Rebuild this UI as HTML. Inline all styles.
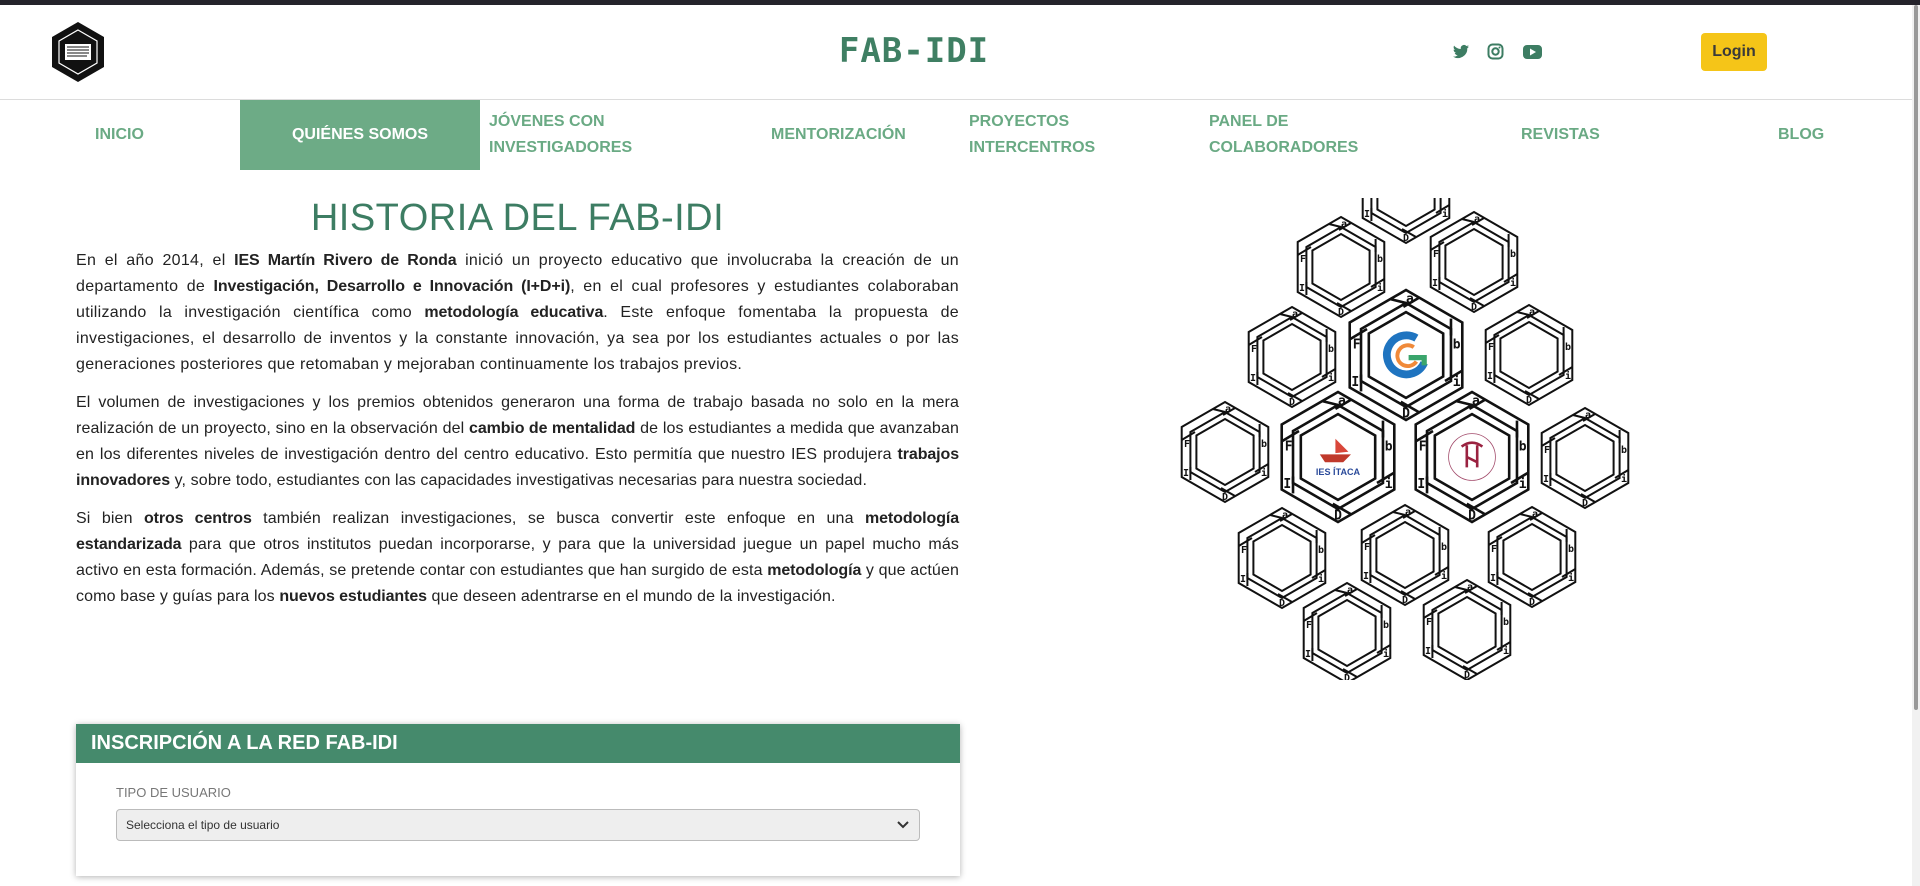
<!DOCTYPE html>
<html><head><meta charset="utf-8"><style>
*{box-sizing:border-box;margin:0;padding:0}
body{width:1920px;height:886px;overflow:hidden;background:#fff;font-family:"Liberation Sans",sans-serif;color:#212529;position:relative}
.topbar{position:absolute;left:0;top:0;width:1920px;height:5px;background:#24232b}
.header{position:absolute;left:0;top:5px;width:1912px;height:95px;border-bottom:1px solid #dcdcdc}
.title{position:absolute;left:0;width:1828px;top:26px;text-align:center;font-family:"DejaVu Sans Mono",monospace;font-weight:bold;font-size:34px;color:#3f7f63;letter-spacing:1px}
.login{position:absolute;left:1701px;top:28px;width:66px;height:38px;background:#f5c518;border-radius:4px;font-weight:bold;font-size:16px;color:#3a3a3a;text-align:center;line-height:38px}
.nav{position:absolute;top:100px;left:0;height:70px;width:1912px}
.nav div{position:absolute;top:0;height:70px;display:flex;align-items:center;font-size:16px;font-weight:bold;color:#6aaa84;line-height:26px;text-transform:uppercase}
.nav .act{background:#6dab86;color:#fff;justify-content:center}
h1{position:absolute;left:76px;width:883px;top:197px;text-align:center;font-weight:normal;font-size:38px;color:#3d7d63;letter-spacing:.5px}
.txt{position:absolute;left:76px;width:883px;top:248px;font-size:16px;letter-spacing:.3px;line-height:26px;text-align:justify;color:#222}
.txt b{letter-spacing:-.1px}
.txt p{margin-bottom:12px}
.txt p.n{letter-spacing:.12px}
.card{position:absolute;left:76px;top:724px;width:884px;height:152px;box-shadow:0 1px 6px rgba(0,0,0,.3);background:#fff}
.card .hd{height:39px;background:#458a6c;color:#fff;font-weight:bold;font-size:20px;line-height:39px;padding-left:15px}
.card .lb{position:absolute;left:40px;top:61px;font-size:13px;color:#777}
.card .sel{position:absolute;left:40px;top:85px;width:804px;height:32px;background:#eee;border:1px solid #bbb;border-radius:4px;font-size:12px;line-height:30px;padding-left:9px;color:#333}
.scroll{position:absolute;left:1912px;top:5px;width:8px;height:881px;background:#f1f1f1}
.scroll i{position:absolute;left:2px;top:0;width:4px;height:705px;background:#999;border-radius:2px}
</style></head><body>
<div class="topbar"></div>
<div class="header">
<svg style="position:absolute;left:50px;top:16px" width="56" height="62" viewBox="0 0 56 62">
<polygon points="28,1 54,16 54,46 28,61 2,46 2,16" fill="#111"/>
<polygon points="28,9 47,20 47,42 28,53 9,42 9,20" fill="none" stroke="#fff" stroke-width="1.2"/>
<rect x="15" y="23" width="26" height="16" fill="#fff"/>
<g stroke="#111" stroke-width="1"><line x1="17" y1="26" x2="39" y2="26"/><line x1="17" y1="29" x2="39" y2="29"/><line x1="17" y1="32" x2="39" y2="32"/><line x1="17" y1="35" x2="37" y2="35"/></g>
</svg>
<div class="title">FAB-IDI</div>
<svg style="position:absolute;left:1453px;top:38px" width="95" height="18" viewBox="0 0 95 18" fill="#3d7d63">
<path d="M16 3.5c-.6.3-1.2.4-1.9.5.7-.4 1.2-1 1.4-1.8-.6.4-1.3.6-2.1.8A3.3 3.3 0 0 0 7.8 6c-2.7-.1-5.1-1.4-6.7-3.4-.9 1.5-.4 3.4 1 4.4-.5 0-1-.2-1.5-.4 0 1.6 1.1 3 2.6 3.3-.5.1-1 .2-1.5.1.4 1.3 1.7 2.3 3.1 2.3A6.6 6.6 0 0 1 0 13.6 9.3 9.3 0 0 0 14.3 5.3c.7-.5 1.2-1.1 1.7-1.8z"/>
<rect x="35.5" y="1.5" width="14" height="14" rx="4" fill="none" stroke="#3d7d63" stroke-width="2"/>
<circle cx="42.5" cy="8.5" r="3.2" fill="none" stroke="#3d7d63" stroke-width="2"/><circle cx="46.5" cy="4.5" r="1"/>
<rect x="70" y="2" width="19" height="14" rx="4"/><polygon points="77,5.5 83,9 77,12.5" fill="#fff"/>
</svg>
<div class="login">Login</div>
</div>
<div class="nav">
<div style="left:95px">INICIO</div>
<div class="act" style="left:240px;width:240px">QUIÉNES SOMOS</div>
<div style="left:489px">JÓVENES CON<br>INVESTIGADORES</div>
<div style="left:771px">MENTORIZACIÓN</div>
<div style="left:969px">PROYECTOS<br>INTERCENTROS</div>
<div style="left:1209px">PANEL DE<br>COLABORADORES</div>
<div style="left:1521px">REVISTAS</div>
<div style="left:1778px">BLOG</div>
</div>
<h1>HISTORIA DEL FAB-IDI</h1>
<div class="txt">
<p>En el año 2014, el <b>IES Martín Rivero de Ronda</b> inició un proyecto educativo que involucraba la creación de un departamento de <b>Investigación, Desarrollo e Innovación (I+D+i)</b>, en el cual profesores y estudiantes colaboraban utilizando la investigación científica como <b>metodología educativa</b>. Este enfoque fomentaba la propuesta de investigaciones, el desarrollo de inventos y la constante innovación, ya sea por los estudiantes actuales o por las generaciones posteriores que retomaban y mejoraban continuamente los trabajos previos.</p>
<p class="n">El volumen de investigaciones y los premios obtenidos generaron una forma de trabajo basada no solo en la mera realización de un proyecto, sino en la observación del <b>cambio de mentalidad</b> de los estudiantes a medida que avanzaban en los diferentes niveles de investigación dentro del centro educativo. Esto permitía que nuestro IES produjera <b>trabajos innovadores</b> y, sobre todo, estudiantes con las capacidades investigativas necesarias para nuestra sociedad.</p>
<p class="n">Si bien <b>otros centros</b> también realizan investigaciones, se busca convertir este enfoque en una <b>metodología estandarizada</b> para que otros institutos puedan incorporarse, y para que la universidad juegue un papel mucho más activo en esta formación. Además, se pretende contar con estudiantes que han surgido de esta <b>metodología</b> y que actúen como base y guías para los <b>nuevos estudiantes</b> que deseen adentrarse en el mundo de la investigación.</p>
</div>
<svg style="position:absolute;left:1150px;top:180px" width="520" height="510" viewBox="1150 180 520 510">
<defs>
<clipPath id="cp"><rect x="1150" y="198" width="520" height="482"/></clipPath>
<g id="hx" fill="none" stroke="#111" stroke-width="2">
<polygon points="0,-50 43.3,-25 43.3,25 0,50 -43.3,25 -43.3,-25"/>
<polygon points="0,-40 34.6,-20 34.6,20 0,40 -34.6,20 -34.6,-20"/>
<polygon points="0,-33 28.6,-16.5 28.6,16.5 0,33 -28.6,16.5 -28.6,-16.5"/>
<line x1="-12" y1="-43" x2="0" y2="-40"/><line x1="10" y1="-44" x2="-2" y2="-37"/>
<line x1="34.6" y1="-28" x2="34.6" y2="-15"/><line x1="43.3" y1="12" x2="30" y2="20"/>
<line x1="10" y1="44" x2="-4" y2="36"/><line x1="-34.6" y1="28" x2="-34.6" y2="15"/><line x1="-43.3" y1="-12" x2="-30" y2="-20"/>
</g>
</defs>
<g clip-path="url(#cp)" font-family="DejaVu Sans Mono,monospace" font-weight="bold" font-size="10" fill="#111" text-anchor="middle">
<g transform="translate(1406,193)"><use href="#hx"/><text x="3" y="-40">a</text><text x="-38" y="-5">F</text><text x="39" y="-5">b</text><text x="39" y="24">i</text><text x="-39" y="24">I</text><text x="0" y="48">D</text></g>
<g transform="translate(1341,267)"><use href="#hx"/><text x="3" y="-40">a</text><text x="-38" y="-5">F</text><text x="39" y="-5">b</text><text x="39" y="24">i</text><text x="-39" y="24">I</text><text x="0" y="48">D</text></g>
<g transform="translate(1474,262)"><use href="#hx"/><text x="3" y="-40">a</text><text x="-38" y="-5">F</text><text x="39" y="-5">b</text><text x="39" y="24">i</text><text x="-39" y="24">I</text><text x="0" y="48">D</text></g>
<g transform="translate(1292,357)"><use href="#hx"/><text x="3" y="-40">a</text><text x="-38" y="-5">F</text><text x="39" y="-5">b</text><text x="39" y="24">i</text><text x="-39" y="24">I</text><text x="0" y="48">D</text></g>
<g transform="translate(1529,355)"><use href="#hx"/><text x="3" y="-40">a</text><text x="-38" y="-5">F</text><text x="39" y="-5">b</text><text x="39" y="24">i</text><text x="-39" y="24">I</text><text x="0" y="48">D</text></g>
<g transform="translate(1225,452)"><use href="#hx"/><text x="3" y="-40">a</text><text x="-38" y="-5">F</text><text x="39" y="-5">b</text><text x="39" y="24">i</text><text x="-39" y="24">I</text><text x="0" y="48">D</text></g>
<g transform="translate(1585,458)"><use href="#hx"/><text x="3" y="-40">a</text><text x="-38" y="-5">F</text><text x="39" y="-5">b</text><text x="39" y="24">i</text><text x="-39" y="24">I</text><text x="0" y="48">D</text></g>
<g transform="translate(1282,558)"><use href="#hx"/><text x="3" y="-40">a</text><text x="-38" y="-5">F</text><text x="39" y="-5">b</text><text x="39" y="24">i</text><text x="-39" y="24">I</text><text x="0" y="48">D</text></g>
<g transform="translate(1405,555)"><use href="#hx"/><text x="3" y="-40">a</text><text x="-38" y="-5">F</text><text x="39" y="-5">b</text><text x="39" y="24">i</text><text x="-39" y="24">I</text><text x="0" y="48">D</text></g>
<g transform="translate(1532,557)"><use href="#hx"/><text x="3" y="-40">a</text><text x="-38" y="-5">F</text><text x="39" y="-5">b</text><text x="39" y="24">i</text><text x="-39" y="24">I</text><text x="0" y="48">D</text></g>
<g transform="translate(1347,633)"><use href="#hx"/><text x="3" y="-40">a</text><text x="-38" y="-5">F</text><text x="39" y="-5">b</text><text x="39" y="24">i</text><text x="-39" y="24">I</text><text x="0" y="48">D</text></g>
<g transform="translate(1467,630)"><use href="#hx"/><text x="3" y="-40">a</text><text x="-38" y="-5">F</text><text x="39" y="-5">b</text><text x="39" y="24">i</text><text x="-39" y="24">I</text><text x="0" y="48">D</text></g>
<g transform="translate(1406,355) scale(1.3)"><polygon points="0,-50 43.3,-25 43.3,25 0,50 -43.3,25 -43.3,-25" fill="#fff"/><use href="#hx"/><text x="3" y="-40">a</text><text x="-38" y="-5">F</text><text x="39" y="-5">b</text><text x="39" y="24">i</text><text x="-39" y="24">I</text><text x="0" y="48">D</text>
<path d="M8,-13 A15,15 0 1 0 14,6" fill="none" stroke="#1f74c0" stroke-width="6"/><path d="M6,-6 A8,8 0 1 0 8,5" fill="none" stroke="#f08a3a" stroke-width="3"/><path d="M2,2 L14,2 L14,8" fill="none" stroke="#3aa56c" stroke-width="4"/></g>
<g transform="translate(1338,457) scale(1.3)"><polygon points="0,-50 43.3,-25 43.3,25 0,50 -43.3,25 -43.3,-25" fill="#fff"/><use href="#hx"/><text x="3" y="-40">a</text><text x="-38" y="-5">F</text><text x="39" y="-5">b</text><text x="39" y="24">i</text><text x="-39" y="24">I</text><text x="0" y="48">D</text>
<path d="M-14,-2 L10,-2 L4,4 L-10,4 Z" fill="#c0392b"/><path d="M-2,-3 L-2,-14 L8,-4 Z" fill="#d9473a"/><text x="0" y="14" font-family="Liberation Sans,sans-serif" font-size="7" fill="#2a4a9a">IES ÍTACA</text></g>
<g transform="translate(1472,457) scale(1.3)"><polygon points="0,-50 43.3,-25 43.3,25 0,50 -43.3,25 -43.3,-25" fill="#fff"/><use href="#hx"/><text x="3" y="-40">a</text><text x="-38" y="-5">F</text><text x="39" y="-5">b</text><text x="39" y="24">i</text><text x="-39" y="24">I</text><text x="0" y="48">D</text>
<circle r="18" fill="none" stroke="#a24a6a" stroke-width=".6"/><path d="M-8,-8 Q0,-14 8,-8 M-4,-9 L-4,8 M4,-9 L4,8 M-4,0 L4,4" fill="none" stroke="#9a2240" stroke-width="2"/></g>
</g>
</svg>
<div class="card"><div class="hd">INSCRIPCIÓN A LA RED FAB-IDI</div>
<div class="lb">TIPO DE USUARIO</div>
<div class="sel">Selecciona el tipo de usuario<svg style="position:absolute;right:10px;top:11px" width="12" height="8" viewBox="0 0 12 8"><path d="M1 1l5 5 5-5" fill="none" stroke="#333" stroke-width="2"/></svg></div></div>
<div class="scroll"><i></i></div>
</body></html>
